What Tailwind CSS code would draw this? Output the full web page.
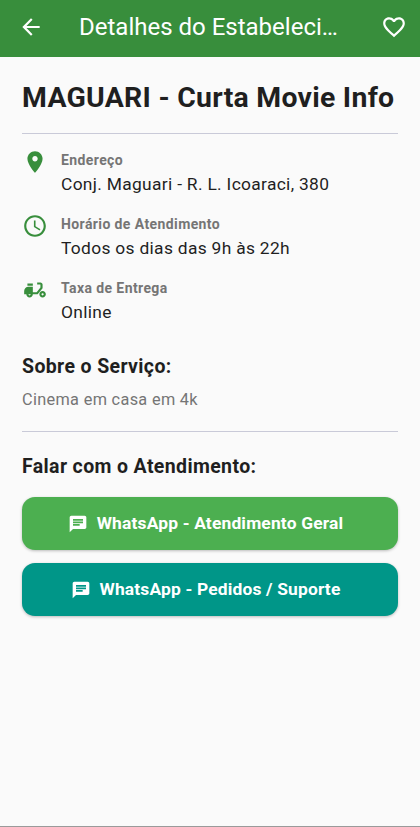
<!DOCTYPE html>
<html lang="pt-BR">
<head>
<meta charset="utf-8">
<title>Detalhes do Estabelecimento</title>
<script src="https://cdn.jsdelivr.net/npm/@tailwindcss/browser@4"></script>
</head>
<body class="font-[Roboto,sans-serif] bg-[#fafafa] text-[#1f1f1f]">
<div class="flex h-[827px] flex-col border-b border-[#9a9a9a]">
  <header class="flex h-[57px] shrink-0 items-center bg-[#388e3c] pb-[3px] pl-[18px] pr-[13px] text-white">
    <svg class="size-[26px] shrink-0" viewBox="0 0 24 24" fill="currentColor"><path d="M20 11H7.83l5.59-5.59L12 4l-8 8 8 8 1.41-1.41L7.83 13H20v-2z"/></svg>
    <h1 class="ml-[35px] flex-1 whitespace-nowrap text-[24px] leading-[28px]">Detalhes do Estabeleci…</h1>
    <svg class="size-[26px] shrink-0" viewBox="0 0 24 24" fill="currentColor"><path d="M16.5 3c-1.74 0-3.41.81-4.5 2.09C10.91 3.81 9.24 3 7.5 3 4.42 3 2 5.42 2 8.5c0 3.78 3.4 6.86 8.55 11.54L12 21.35l1.45-1.32C18.6 15.36 22 12.28 22 8.5 22 5.42 19.58 3 16.5 3zm-4.4 15.55l-.1.1-.1-.1C7.14 14.24 4 11.39 4 8.5 4 6.5 5.5 5 7.5 5c1.54 0 3.04.99 3.57 2.36h1.87C13.46 5.99 14.96 5 16.5 5c2 0 3.5 1.5 3.5 3.5 0 2.89-3.14 5.74-7.9 10.05z"/></svg>
  </header>
  <main class="flex flex-col px-[22px] pt-[23px]">
    <h2 class="whitespace-nowrap text-[28.4px] font-bold leading-[36px] tracking-[0.27px]">MAGUARI - Curta Movie Info</h2>
    <hr class="mt-[17px] border-t border-[#c9cad8]">
    <ul class="mt-[15px] flex flex-col gap-[18px]">
      <li class="flex h-[46px] gap-[13px]">
        <svg class="size-[26px] shrink-0 text-[#388e3c]" viewBox="0 0 24 24" fill="currentColor"><path d="M12 2C8.13 2 5 5.13 5 9c0 5.25 7 13 7 13s7-7.75 7-13c0-3.87-3.13-7-7-7zm0 9.5c-1.38 0-2.5-1.12-2.5-2.5s1.12-2.5 2.5-2.5 2.5 1.12 2.5 2.5-1.12 2.5-2.5 2.5z"/></svg>
        <div><p class="text-[14px] font-bold leading-[22px] tracking-[0.4px] text-[#757575]">Endereço</p><p class="text-[17.4px] leading-[26px] tracking-[0.31px]">Conj. Maguari - R. L. Icoaraci, 380</p></div>
      </li>
      <li class="flex h-[46px] gap-[13px]">
        <svg class="size-[26px] shrink-0 text-[#388e3c]" viewBox="0 0 24 24" fill="currentColor"><path d="M11.99 2C6.47 2 2 6.48 2 12s4.47 10 9.99 10C17.52 22 22 17.52 22 12S17.52 2 11.99 2zM12 20c-4.42 0-8-3.58-8-8s3.58-8 8-8 8 3.58 8 8-3.58 8-8 8zm.5-13H11v6l5.25 3.15.75-1.23-4.5-2.67z"/></svg>
        <div><p class="text-[14px] font-bold leading-[22px] tracking-[0.4px] text-[#757575]">Horário de Atendimento</p><p class="text-[17.4px] leading-[26px] tracking-[0.31px]">Todos os dias das 9h às 22h</p></div>
      </li>
      <li class="flex h-[46px] gap-[13px]">
        <svg class="size-[26px] shrink-0 text-[#388e3c]" viewBox="0 0 24 24" fill="currentColor"><path fill-rule="evenodd" d="M19 7c0-1.1-.9-2-2-2h-3v2h3v2.65L13.52 14H10V9H6c-2.21 0-4 1.79-4 4v3h2c0 1.66 1.34 3 3 3s3-1.34 3-3h4.48L19 10.35V7zM7 17c-.55 0-1-.45-1-1h2c0 .55-.45 1-1 1zM5 6h5v2H5zM19 13c-1.66 0-3 1.34-3 3s1.34 3 3 3 3-1.34 3-3-1.34-3-3-3zm0 4c-.55 0-1-.45-1-1s.45-1 1-1 1 .45 1 1-.45 1-1 1z"/></svg>
        <div><p class="text-[14px] font-bold leading-[22px] tracking-[0.4px] text-[#757575]">Taxa de Entrega</p><p class="text-[17.4px] leading-[26px] tracking-[0.31px]">Online</p></div>
      </li>
    </ul>
    <h3 class="mt-[31px] text-[19.5px] font-bold leading-[26px] tracking-[0.37px]">Sobre o Serviço:</h3>
    <p class="mt-[7px] text-[16.3px] leading-[26px] tracking-[0.33px] text-[#757575]">Cinema em casa em 4k</p>
    <hr class="mt-[18px] border-t border-[#c9cad8]">
    <h3 class="mt-[22px] text-[19.5px] font-bold leading-[26px] tracking-[0.37px]">Falar com o Atendimento:</h3>
    <div class="mt-[17px] flex flex-col gap-[13px]">
      <button class="flex h-[53px] items-center justify-center gap-[9px] rounded-[13px] bg-[#4caf50] pr-[9px] text-[17.4px] font-bold tracking-[0.17px] text-white shadow-[0_1px_3px_rgba(0,0,0,0.25)]">
        <svg class="size-[20px]" viewBox="0 0 24 24" fill="currentColor"><path d="M20 2H4c-1.1 0-1.99.9-1.99 2L2 22l4-4h14c1.1 0 2-.9 2-2V4c0-1.1-.9-2-2-2zM6 9h12v2H6V9zm8 5H6v-2h8v2zm4-6H6V6h12v2z"/></svg>
        <span>WhatsApp - Atendimento Geral</span>
      </button>
      <button class="flex h-[53px] items-center justify-center gap-[9px] rounded-[13px] bg-[#009688] pr-[9px] text-[17.4px] font-bold tracking-[0.17px] text-white shadow-[0_1px_3px_rgba(0,0,0,0.25)]">
        <svg class="size-[20px]" viewBox="0 0 24 24" fill="currentColor"><path d="M20 2H4c-1.1 0-1.99.9-1.99 2L2 22l4-4h14c1.1 0 2-.9 2-2V4c0-1.1-.9-2-2-2zM6 9h12v2H6V9zm8 5H6v-2h8v2zm4-6H6V6h12v2z"/></svg>
        <span>WhatsApp - Pedidos / Suporte</span>
      </button>
    </div>
  </main>
</div>
</body>
</html>
